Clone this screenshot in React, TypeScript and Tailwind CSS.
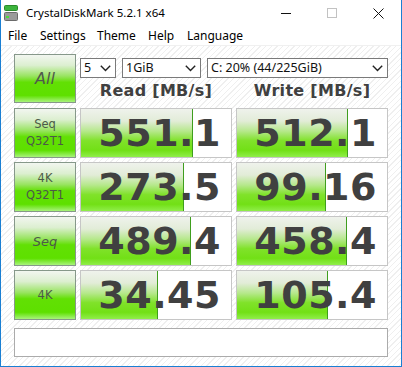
const rows = [
  { label: ["Seq", "Q32T1"], read: "551.1", readBar: 112, write: "512.1", writeBar: 111 },
  { label: ["4K", "Q32T1"], read: "273.5", readBar: 103, write: "99.16", writeBar: 89 },
  { label: ["Seq"], read: "489.4", readBar: 110, write: "458.4", writeBar: 110, italic: true },
  { label: ["4K"], read: "34.45", readBar: 77, write: "105.4", writeBar: 91 },
];

const btnBg =
  "bg-[image:linear-gradient(to_bottom,#f2f6f0_0%,#dcefd0_22%,#98e460_45%,#62e004_58%,#5ee000_86%,#a8f37c_100%)]";
const barBg =
  "bg-[image:linear-gradient(to_bottom,#eff2ec_0%,#e2ecd8_25%,#b6e88c_46%,#80e22a_66%,#72e016_86%,#90ee4a_100%)]";

function Chevron() {
  return (
    <svg width="11" height="7" viewBox="0 0 11 7" className="shrink-0">
      <path d="M0.8 0.8 L5.5 5.5 L10.2 0.8" fill="none" stroke="#222" strokeWidth="1.4" />
    </svg>
  );
}

function Select({ text, width }: { text: string; width: string }) {
  return (
    <div
      className={`${width} h-[20px] bg-white border border-[#7a7a7a] flex items-center justify-between pl-[3px] pr-[4px] text-[12.5px] text-[#111] font-['Noto_Sans',sans-serif]`}
    >
      <span className="leading-none">{text}</span>
      <Chevron />
    </div>
  );
}

function TestButton({ label, italic }: { label: string[]; italic?: boolean }) {
  return (
    <div
      className={`h-[50px] border border-[#86988a] ${btnBg} flex flex-col items-center justify-center text-[11.5px] leading-[17px] text-[#4c5a48] font-['DejaVu_Sans',sans-serif] ${italic ? "italic text-[13px]" : ""}`}
    >
      {label.map((l) => (
        <span key={l}>{l}</span>
      ))}
    </div>
  );
}

function Result({ value, bar }: { value: string; bar: number }) {
  return (
    <div className="relative h-[50px] bg-white border border-[#c6c6c6] overflow-hidden">
      <div
        className={`absolute left-0 top-0 bottom-0 ${barBg} border-r border-[#3f9e1e]`}
        style={{ width: bar }}
      />
      <div className="relative h-full flex items-center justify-end pr-[10px] font-['DejaVu_Sans',sans-serif] font-bold text-[38px] tracking-[0.5px] text-[#404040] leading-none">
        {value}
      </div>
    </div>
  );
}

export default function App() {
  return (
    <div className="w-[402px] h-[367px] bg-white border-x border-b border-[#1a7fd3] flex flex-col font-['Noto_Sans',sans-serif] text-[#000] overflow-hidden">
      <div className="h-[26px] flex items-center shrink-0">
        <svg width="14" height="16" viewBox="0 0 14 16" className="ml-[3px]">
          <rect x="0.5" y="0.5" width="13" height="5" rx="1" fill="#3cb43c" stroke="#2a8a2a" />
          <rect x="0.5" y="7.5" width="13" height="8" rx="1" fill="#9a9a9a" stroke="#6a6a6a" />
          <rect x="2" y="11" width="3" height="2" fill="#4ddc3c" />
        </svg>
        <span className="ml-[8px] text-[11.5px]">CrystalDiskMark 5.2.1 x64</span>
        <div className="ml-auto flex h-full">
          <div className="w-[46px] flex items-center justify-center">
            <div className="w-[10px] h-px bg-[#111]" />
          </div>
          <div className="w-[46px] flex items-center justify-center">
            <div className="w-[10px] h-[10px] border border-[#c2c2c2]" />
          </div>
          <div className="w-[46px] flex items-center justify-center">
            <svg width="11" height="11" viewBox="0 0 11 11">
              <path d="M0.5 0.5 L10.5 10.5 M10.5 0.5 L0.5 10.5" stroke="#111" strokeWidth="1" />
            </svg>
          </div>
        </div>
      </div>

      <div className="h-[20px] flex items-center pl-[7px] text-[12px] shrink-0 border-b border-[#f0f0f0]">
        <span className="w-[32px]">File</span>
        <span className="w-[57px]">Settings</span>
        <span className="w-[51px]">Theme</span>
        <span className="w-[39px]">Help</span>
        <span>Language</span>
      </div>

      <div className="flex-1 px-[13px] pt-[8px] bg-[image:repeating-linear-gradient(135deg,#ffffff_0px,#ffffff_3px,#efefef_3px,#efefef_4px)]">
        <div className="grid grid-cols-[62px_152px_152px] gap-x-[4px]">
          <div className="h-[49px] border border-[#86988a] bg-[image:linear-gradient(to_bottom,#f2f6f0_0%,#dcefd0_22%,#98e460_45%,#62e004_58%,#5ee000_86%,#a8f37c_100%)] flex items-center justify-center italic text-[16px] text-[#505a4c] font-['DejaVu_Sans',sans-serif]">
            All
          </div>
          <div className="col-span-2 flex flex-col">
            <div className="flex gap-[6px] mt-[4px]">
              <Select text="5" width="w-[36px]" />
              <Select text="1GiB" width="w-[79px]" />
              <Select text="C: 20% (44/225GiB)" width="w-[181px]" />
            </div>
            <div className="grid grid-cols-2 gap-x-[4px] flex-1 items-center font-['DejaVu_Sans',sans-serif] font-bold text-[16px] text-[#404040] tracking-[0.3px]">
              <div className="text-center">Read [MB/s]</div>
              <div className="text-center">Write [MB/s]</div>
            </div>
          </div>
        </div>

        <div className="grid grid-cols-[62px_152px_152px] gap-x-[4px] gap-y-[4px] mt-[5px]">
          {rows.map((r) => (
            <div key={r.label.join() + r.read} className="contents">
              <TestButton label={r.label} italic={r.italic} />
              <Result value={r.read} bar={r.readBar} />
              <Result value={r.write} bar={r.writeBar} />
            </div>
          ))}
        </div>

        <div className="mt-[8px] h-[29px] w-[374px] bg-white border border-[#ababab]" />
      </div>
    </div>
  );
}
